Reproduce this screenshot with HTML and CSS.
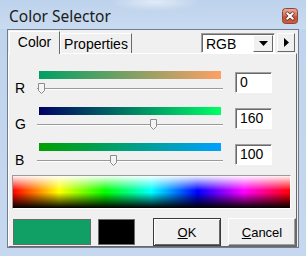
FILE: index.html
```html
<!DOCTYPE html>
<html>
<head>
<meta charset="utf-8">
<link rel="stylesheet" href="styles.css">
</head>
<body>
<div class="window">
  <div class="titlebar">
    <span class="title">Color Selector</span>
    <span class="close">
      <svg width="16" height="16" viewBox="0 0 16 16">
        <defs>
          <linearGradient id="cg" x1="0" y1="0" x2="0" y2="1">
            <stop offset="0" stop-color="#eab0a2"/>
            <stop offset="0.45" stop-color="#d77460"/>
            <stop offset="0.55" stop-color="#c9523a"/>
            <stop offset="1" stop-color="#c9603f"/>
          </linearGradient>
        </defs>
        <rect x="0.5" y="0.5" width="15" height="15" rx="3" fill="url(#cg)" stroke="#8e4636"/>
        <path d="M5.2 5.2 L10.8 10.8 M10.8 5.2 L5.2 10.8" stroke="#5e2a20" stroke-width="3.4" stroke-linecap="round"/>
        <path d="M5.2 5.2 L10.8 10.8 M10.8 5.2 L5.2 10.8" stroke="#ffffff" stroke-width="2" stroke-linecap="round"/>
      </svg>
    </span>
  </div>
  <div class="client">
    <div class="tabrow">
      <div class="tab active">Color</div>
      <div class="tab props">Properties</div>
      <div class="select">
        <span class="select-text">RGB</span>
        <span class="dd">
          <svg width="9" height="5" viewBox="0 0 9 5"><polygon points="0,0 9,0 4.5,5" fill="#000"/></svg>
        </span>
      </div>
      <div class="arrowbtn">
        <svg width="5" height="9" viewBox="0 0 5 9"><polygon points="0,0 5,4.5 0,9" fill="#000"/></svg>
      </div>
    </div>
    <div class="page">
      <div class="sliders">
        <div class="row">
          <span class="lbl">R</span>
          <div class="slider">
            <div class="bar bar-r"></div>
            <div class="track">
              <div class="line"></div>
              <svg class="thumb" style="left:1px" width="7" height="11" viewBox="0 0 7 11"><polygon points="0.5,0.5 6.5,0.5 6.5,7.5 3.5,10.5 0.5,7.5" fill="#f4f4f4" stroke="#8c8c8c"/></svg>
            </div>
          </div>
          <div class="num">0</div>
        </div>
        <div class="row">
          <span class="lbl">G</span>
          <div class="slider">
            <div class="bar bar-g"></div>
            <div class="track">
              <div class="line"></div>
              <svg class="thumb" style="left:113px" width="7" height="11" viewBox="0 0 7 11"><polygon points="0.5,0.5 6.5,0.5 6.5,7.5 3.5,10.5 0.5,7.5" fill="#f4f4f4" stroke="#8c8c8c"/></svg>
            </div>
          </div>
          <div class="num">160</div>
        </div>
        <div class="row">
          <span class="lbl">B</span>
          <div class="slider">
            <div class="bar bar-b"></div>
            <div class="track">
              <div class="line"></div>
              <svg class="thumb" style="left:73px" width="7" height="11" viewBox="0 0 7 11"><polygon points="0.5,0.5 6.5,0.5 6.5,7.5 3.5,10.5 0.5,7.5" fill="#f4f4f4" stroke="#8c8c8c"/></svg>
            </div>
          </div>
          <div class="num">100</div>
        </div>
      </div>
      <div class="spectrum"></div>
      <div class="bottom">
        <div class="swatch swatch-new"></div>
        <div class="swatch swatch-old"></div>
        <div class="btn btn-default"><span><u>O</u>K</span></div>
        <div class="btn"><span><u>C</u>ancel</span></div>
      </div>
    </div>
  </div>
</div>
</body>
</html>
```

FILE: styles.css
```css
* { box-sizing: border-box; }

body {
  margin: 0;
  font-family: "Liberation Sans", Arial, sans-serif;
  font-size: 14px;
  color: #000;
}

.window {
  width: 306px;
  height: 256px;
  display: flex;
  flex-direction: column;
  background: linear-gradient(#bfd3ec, #c5d8ef);
}

.titlebar {
  height: 29px;
  display: flex;
  align-items: flex-start;
  justify-content: space-between;
  padding: 0 8px 0 8px;
  background:
    radial-gradient(ellipse 45px 9px at 155px 2px, rgba(255,255,255,0.55), rgba(255,255,255,0)),
    linear-gradient(#bdd2ec, #c9dbf0);
}

.title {
  font-family: "Noto Sans", sans-serif;
  font-size: 15.5px;
  color: #1b1b1b;
  line-height: 20px;
  margin-top: 6px;
  padding-left: 1px;
}

.close {
  display: flex;
  margin-top: 8px;
}

.client {
  flex: 1;
  margin: 0 7px 8px 7px;
  border: 1px solid #6e7d90;
  background: #f0f0f0;
  display: flex;
  flex-direction: column;
}

.tabrow {
  height: 23px;
  display: flex;
  align-items: flex-end;
  padding: 0 3px 0 1px;
}

.tab {
  height: 20px;
  border-top: 1px solid #fff;
  border-left: 1px solid #fff;
  border-right: 1px solid #696969;
  display: flex;
  align-items: center;
  justify-content: center;
  background: #f0f0f0;
}

.tab.active {
  width: 51px;
  height: 23px;
  margin-bottom: -1px;
  position: relative;
  z-index: 1;
  padding-bottom: 2px;
}

.tab.props {
  width: 72px;
  padding-top: 1px;
}

.select {
  align-self: flex-start;
  margin-top: 3px;
  margin-left: auto;
  width: 74px;
  height: 20px;
  background: #fff;
  border: 1px solid;
  border-color: #a0a0a0 #fff #fff #a0a0a0;
  box-shadow: inset 1px 1px 0 #696969;
  display: flex;
  align-items: stretch;
  padding: 1px 1px 0 2px;
}

.select-text {
  flex: 1;
  display: flex;
  align-items: center;
  padding-left: 2px;
}

.dd {
  width: 20px;
  background: #f0f0f0;
  border: 1px solid;
  border-color: #fff #696969 #696969 #fff;
  display: flex;
  align-items: center;
  justify-content: center;
}

.arrowbtn {
  align-self: flex-start;
  margin-top: 3px;
  margin-left: 2px;
  width: 18px;
  height: 19px;
  background: #f0f0f0;
  border: 1px solid;
  border-color: #fff #696969 #696969 #fff;
  display: flex;
  align-items: center;
  justify-content: center;
}

.page {
  flex: 1;
  margin-right: 1px;
  border: 1px solid;
  border-color: #fff #696969 #696969 #fff;
  display: flex;
  flex-direction: column;
  padding-top: 17px;
}

.sliders {
  display: flex;
  flex-direction: column;
  gap: 13px;
  padding-left: 5px;
}

.row {
  display: grid;
  grid-template-columns: 23px 186px 49px;
  height: 23px;
}

.lbl {
  align-self: end;
  line-height: 14px;
  padding-left: 1px;
  margin-bottom: -1px;
}

.slider {
  display: flex;
  flex-direction: column;
}

.bar {
  height: 8px;
  margin: 0 2px 0 2px;
}

.bar-r { background: linear-gradient(to right, #00a064, #ffa064); }
.bar-g { background: linear-gradient(to right, #000064, #00ff64); }
.bar-b { background: linear-gradient(to right, #00a000, #00a0ff); }

.track {
  position: relative;
  height: 15px;
}

.line {
  margin-top: 9px;
  height: 2px;
  border-top: 1px solid #9a9a9a;
  border-bottom: 1px solid #fff;
}

.thumb {
  position: absolute;
  top: 4px;
}

.num {
  align-self: start;
  margin-top: 1px;
  margin-left: 12px;
  height: 21px;
  background: #fff;
  border: 1px solid;
  border-color: #a0a0a0 #fff #fff #a0a0a0;
  box-shadow: inset 1px 1px 0 #696969;
  font-size: 14px;
  line-height: 19px;
  padding-left: 4px;
}

.spectrum {
  margin: 9px 5px 0 3px;
  height: 34px;
  border: 1px solid;
  border-color: #9a9a9a #fff #fff #9a9a9a;
  background:
    linear-gradient(to bottom, rgba(255,255,255,0.95) 0%, rgba(255,255,255,0) 45%, rgba(0,0,0,0) 52%, #000 100%),
    linear-gradient(to right, #f00, #ff0, #0f0, #0ff, #00f, #f0f, #f00);
}

.bottom {
  margin-top: 9px;
  height: 28px;
  display: flex;
  align-items: center;
  padding-left: 4px;
}

.swatch {
  height: 26px;
  border: 1px solid #6a6a6a;
}

.swatch-new {
  width: 78px;
  background: #10a066;
}

.swatch-old {
  width: 37px;
  margin-left: 7px;
  background: #000;
}

.btn {
  width: 68px;
  height: 28px;
  margin-left: 7px;
  background: #f0f0f0;
  border: 1px solid;
  border-color: #fff #696969 #696969 #fff;
  box-shadow: inset -1px -1px 0 #a0a0a0;
  display: flex;
  align-items: center;
  justify-content: center;
  font-size: 13px;
}

.btn-default {
  margin-left: 18px;
  border: 1px solid #3a3a3a;
  box-shadow: inset 1px 1px 0 #fff, inset -1px -1px 0 #696969;
}
```
